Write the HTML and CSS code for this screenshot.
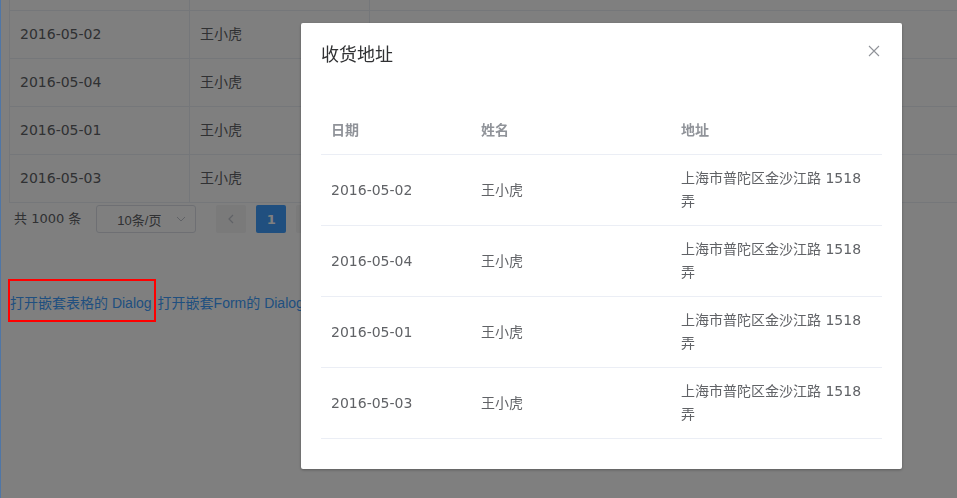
FILE: index.html
```html
<!DOCTYPE html>
<html lang="zh-CN">
<head>
<meta charset="utf-8">
<title>Dialog</title>
<link rel="stylesheet" href="styles.css">
</head>
<body>
<div class="page">
  <div class="bg-table">
    <div class="row"><div class="td"></div><div class="td"></div><div class="td last"></div></div>
    <div class="row"><div class="td"><span class="cell">2016-05-02</span></div><div class="td"><span class="cell">王小虎</span></div><div class="td last"></div></div>
    <div class="row"><div class="td"><span class="cell">2016-05-04</span></div><div class="td"><span class="cell">王小虎</span></div><div class="td last"></div></div>
    <div class="row"><div class="td"><span class="cell">2016-05-01</span></div><div class="td"><span class="cell">王小虎</span></div><div class="td last"></div></div>
    <div class="row"><div class="td"><span class="cell">2016-05-03</span></div><div class="td"><span class="cell">王小虎</span></div><div class="td last"></div></div>
  </div>

  <div class="pagination">
    <span class="total">共 1000 条</span>
    <span class="sizes">
      <span class="select">
        <span class="select-text">10条/页</span>
        <svg class="select-arrow" width="10" height="6" viewBox="0 0 10 6"><path d="M1 1 L5 5 L9 1" fill="none" stroke="#C0C4CC" stroke-width="1"/></svg>
      </span>
    </span>
    <button class="pg-btn prev" type="button"><svg width="8" height="10" viewBox="0 0 8 10"><path d="M6 1 L2 5 L6 9" fill="none" stroke="#C0C4CC" stroke-width="1.2"/></svg></button>
    <span class="pg-btn active">1</span>
    <span class="pg-btn">2</span>
  </div>

  <div class="links">
    <button class="link-btn marked" type="button">打开嵌套表格的 Dialog</button>
    <button class="link-btn" type="button">打开嵌套Form的 Dialog</button>
  </div>
</div>

<div class="overlay"></div>

<div class="dialog-wrap">
  <div class="dialog">
    <div class="dialog-header">
      <span class="dialog-title">收货地址</span>
      <button class="dialog-close" type="button" aria-label="Close">
        <svg width="16" height="16" viewBox="0 0 16 16"><path d="M3 3 L13 13 M13 3 L3 13" fill="none" stroke="#909399" stroke-width="1.1"/></svg>
      </button>
    </div>
    <div class="dialog-body">
      <div class="d-table">
        <div class="d-row d-head"><div class="d-cell">日期</div><div class="d-cell">姓名</div><div class="d-cell">地址</div></div>
        <div class="d-row"><div class="d-cell">2016-05-02</div><div class="d-cell">王小虎</div><div class="d-cell">上海市普陀区金沙江路 1518 弄</div></div>
        <div class="d-row"><div class="d-cell">2016-05-04</div><div class="d-cell">王小虎</div><div class="d-cell">上海市普陀区金沙江路 1518 弄</div></div>
        <div class="d-row"><div class="d-cell">2016-05-01</div><div class="d-cell">王小虎</div><div class="d-cell">上海市普陀区金沙江路 1518 弄</div></div>
        <div class="d-row"><div class="d-cell">2016-05-03</div><div class="d-cell">王小虎</div><div class="d-cell">上海市普陀区金沙江路 1518 弄</div></div>
      </div>
    </div>
  </div>
</div>
</body>
</html>
```

FILE: styles.css
```css
* { box-sizing: border-box; }

html, body {
  margin: 0;
  height: 100%;
}

body {
  font-family: "DejaVu Sans", "Noto Sans CJK SC", sans-serif;
  font-size: 14px;
  color: #606266;
  background: #fff;
  border-left: 1px solid #4f76a6;
  padding-left: 8px;
  overflow: hidden;
}

.page {
  display: flex;
  flex-direction: column;
  align-items: flex-start;
}

/* background table */
.bg-table {
  align-self: stretch;
  border-left: 1px solid #EBEEF5;
  margin-top: -37px;
}

.row {
  display: grid;
  grid-template-columns: 180px 180px 1fr;
}

.td {
  min-height: 48px;
  padding: 12px 0;
  border-right: 1px solid #EBEEF5;
  border-bottom: 1px solid #EBEEF5;
  line-height: 23px;
  white-space: nowrap;
}

.td.last { border-right: none; }

.cell { padding: 0 10px; }

/* pagination */
.pagination {
  display: flex;
  align-items: center;
  padding: 2px 5px;
  font-size: 13px;
  color: #606266;
  white-space: nowrap;
}

.total {
  line-height: 28px;
  margin-right: 10px;
}

.sizes { margin-right: 10px; }

.select {
  display: flex;
  align-items: center;
  justify-content: space-between;
  width: 100px;
  height: 28px;
  margin: 0 5px;
  border: 1px solid #DCDFE6;
  border-radius: 3px;
  padding: 0 9px 0 20px;
  font-family: "Liberation Sans", "Noto Sans CJK SC", sans-serif;
  font-size: 13px;
  color: #606266;
}

.select-arrow { display: block; }

.pg-btn {
  display: flex;
  align-items: center;
  justify-content: center;
  min-width: 30px;
  height: 28px;
  margin: 0 5px;
  padding: 0;
  border: none;
  border-radius: 2px;
  background: #f4f4f5;
  font-family: "DejaVu Sans", sans-serif;
  font-size: 13px;
  font-weight: bold;
  color: #606266;
}

.pg-btn.active {
  background: #409EFF;
  color: #fff;
}

/* links */
.links {
  display: flex;
  gap: 2px;
  margin-top: 48px;
}

.link-btn {
  position: relative;
  font-family: "Liberation Sans", "Noto Sans CJK SC", sans-serif;
  font-size: 14px;
  line-height: 14px;
  padding: 12px 2px 12px 0;
  border: 1px solid transparent;
  background: transparent;
  color: #409EFF;
  white-space: nowrap;
}

.link-btn.marked::after {
  content: "";
  position: absolute;
  left: -2px;
  right: -2px;
  top: -5px;
  bottom: 0;
  border: 2px solid #ff0000;
  z-index: 3000;
}

/* overlay */
.overlay {
  position: fixed;
  top: 0;
  bottom: 0;
  left: 1px;
  right: 0;
  background: rgba(0, 0, 0, 0.5);
  z-index: 2000;
}

.dialog-wrap {
  position: fixed;
  inset: 0;
  z-index: 2001;
}

.dialog {
  width: 601px;
  margin: 23px 0 0 301px;
  background: #fff;
  border-radius: 2px;
  box-shadow: 0 1px 3px rgba(0, 0, 0, 0.3);
}

.dialog-header {
  position: relative;
  padding: 20px 20px 10px;
}

.dialog-title {
  display: block;
  font-size: 18px;
  line-height: 24px;
  color: #303133;
}

.dialog-close {
  position: absolute;
  top: 20px;
  right: 20px;
  width: 16px;
  height: 16px;
  padding: 0;
  border: none;
  background: transparent;
}

.dialog-close svg { display: block; }

.dialog-body {
  padding: 30px 20px;
}

.d-row {
  display: grid;
  grid-template-columns: 150px 200px 1fr;
  align-items: center;
  border-bottom: 1px solid #EBEEF5;
}

.d-cell {
  padding: 12px 10px;
  line-height: 23px;
  color: #606266;
}

.d-head .d-cell {
  color: #909399;
  font-weight: bold;
}
```
